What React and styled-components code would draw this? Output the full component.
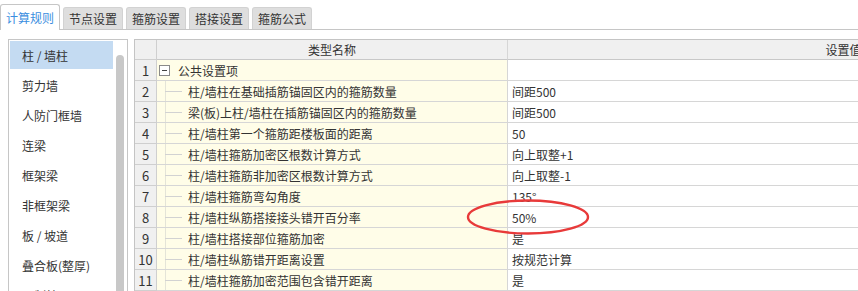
import React from 'react';
import styled, { createGlobalStyle } from 'styled-components';

const GlobalStyle = createGlobalStyle`
    html, body {
        margin: 0;
        padding: 0;
        background: #ffffff;
    }
    body {
        font-family: "Noto Sans CJK SC", "Microsoft YaHei", "Noto Sans", sans-serif;
        font-size: 12px;
        color: #333333;
        overflow: hidden;
    }
`;

const tabs = ['计算规则', '节点设置', '箍筋设置', '搭接设置', '箍筋公式'];

const sideItems = ['柱 / 墙柱', '剪力墙', '人防门框墙', '连梁', '框架梁', '非框架梁', '板 / 坡道', '叠合板(整厚)', '预制柱'];

const rows = [
    ['柱/墙柱在基础插筋锚固区内的箍筋数量', '间距500'],
    ['梁(板)上柱/墙柱在插筋锚固区内的箍筋数量', '间距500'],
    ['柱/墙柱第一个箍筋距楼板面的距离', '50'],
    ['柱/墙柱箍筋加密区根数计算方式', '向上取整+1'],
    ['柱/墙柱箍筋非加密区根数计算方式', '向上取整-1'],
    ['柱/墙柱箍筋弯勾角度', '135°'],
    ['柱/墙柱纵筋搭接接头错开百分率', '50%'],
    ['柱/墙柱搭接部位箍筋加密', '是'],
    ['柱/墙柱纵筋错开距离设置', '按规范计算'],
    ['柱/墙柱箍筋加密范围包含错开距离', '是'],
];

const App = () => {
    return (
        <Page>
            <GlobalStyle />
            <TabBar>
                {tabs.map((t, i) => (
                    <Tab key={t} $active={i === 0}>{t}</Tab>
                ))}
            </TabBar>
            <Body>
                <SidePanel>
                    <SideList>
                        {sideItems.map((s, i) => (
                            <SideItem key={s} $selected={i === 0}>{s}</SideItem>
                        ))}
                    </SideList>
                    <ScrollTrack>
                        <ScrollThumb />
                    </ScrollTrack>
                </SidePanel>
                <Grid>
                    <Row $header>
                        <NumCell />
                        <HeadCell>类型名称</HeadCell>
                        <HeadCell>设置值</HeadCell>
                    </Row>
                    <Row>
                        <NumCell>1</NumCell>
                        <NameCell $group>
                            <Toggle />
                            公共设置项
                        </NameCell>
                        <ValueCell />
                    </Row>
                    {rows.map(([name, value], i) => (
                        <Row key={name}>
                            <NumCell>{i + 2}</NumCell>
                            <NameCell>{name}</NameCell>
                            <ValueCell>{value}</ValueCell>
                        </Row>
                    ))}
                </Grid>
            </Body>
            <Mark width="128" height="40" viewBox="0 0 128 40">
                <ellipse cx="64" cy="20" rx="60" ry="16.5" fill="none" stroke="#e83a3a" strokeWidth="2.4" />
            </Mark>
        </Page>
    );
};

const Page = styled.div`
    position: relative;
    width: 858px;
    height: 291px;
    overflow: hidden;
`;

const TabBar = styled.div`
    display: flex;
    align-items: flex-end;
    gap: 3px;
    height: 29px;
    border-bottom: 1px solid #c6c6c6;
`;

const Tab = styled.div`
    box-sizing: border-box;
    width: 60px;
    display: flex;
    align-items: center;
    justify-content: center;
    border: 1px solid ${({ $active }) => ($active ? '#c6c6c6' : '#d2d2d2')};
    border-bottom: none;
    border-radius: 3px 3px 0 0;
    background: ${({ $active }) => ($active ? '#ffffff' : '#dedede')};
    color: ${({ $active }) => ($active ? '#3a8ee0' : '#333333')};
    height: ${({ $active }) => ($active ? '26px' : '22px')};
    margin-bottom: ${({ $active }) => ($active ? '-1px' : '0')};
    font-size: 12px;
`;

const Body = styled.div`
    display: flex;
    gap: 6px;
    padding: 9px 0 0 8px;
`;

const SidePanel = styled.div`
    box-sizing: border-box;
    display: flex;
    width: 120px;
    height: 262px;
    border: 1px solid #c6c6c6;
    padding: 1px 0 0 1px;
    flex-shrink: 0;
    overflow: hidden;
`;

const SideList = styled.div`
    width: 103px;
    display: flex;
    flex-direction: column;
    gap: 2px;
`;

const SideItem = styled.div`
    height: 28px;
    flex-shrink: 0;
    display: flex;
    align-items: center;
    padding-left: 12px;
    background: ${({ $selected }) => ($selected ? '#c4dbf2' : 'transparent')};
    white-space: nowrap;
`;

const ScrollTrack = styled.div`
    flex: 1;
    padding: 14px 3px 0 3px;
`;

const ScrollThumb = styled.div`
    height: 100%;
    background: #c8c8c8;
    border-radius: 4px 4px 0 0;
`;

const Grid = styled.div`
    display: flex;
    flex-direction: column;
    border-top: 1px solid #c4c4c4;
    border-left: 1px solid #c4c4c4;
    flex-shrink: 0;
`;

const Row = styled.div`
    display: grid;
    grid-template-columns: 22px 351px 672px;
    height: ${({ $header }) => ($header ? '20px' : '21px')};
    background: ${({ $header }) => ($header ? '#f0f0f0' : 'transparent')};
`;

const Cell = styled.div`
    box-sizing: border-box;
    display: flex;
    align-items: center;
    border-right: 1px solid #d6d6d6;
    border-bottom: 1px solid #d6d6d6;
    white-space: nowrap;
    overflow: hidden;
`;

const NumCell = styled(Cell)`
    justify-content: center;
    background: #f0f0f0;
    border-color: #cfcfcf;
    font-size: 13px;
`;

const HeadCell = styled(Cell)`
    justify-content: center;
    border-bottom-color: #c8c8c8;
`;

const NameCell = styled(Cell)`
    position: relative;
    background: #fffde8;
    padding-left: ${({ $group }) => ($group ? '2px' : '31px')};
    gap: 8px;

    &::before {
        content: ${({ $group }) => ($group ? 'none' : "''")};
        position: absolute;
        left: 8px;
        top: 0;
        bottom: 0;
        border-left: 1px solid #e4e4d8;
    }
    &::after {
        content: ${({ $group }) => ($group ? 'none' : "''")};
        position: absolute;
        left: 8px;
        top: 50%;
        width: 17px;
        border-top: 1px solid #d2d2d2;
    }
`;

const ValueCell = styled(Cell)`
    background: #ffffff;
    padding-left: 4px;
`;

const Toggle = styled.span`
    box-sizing: border-box;
    position: relative;
    width: 11px;
    height: 11px;
    border: 1px solid #8a8a8a;
    background: #ffffff;
    flex-shrink: 0;

    &::after {
        content: '';
        position: absolute;
        left: 2px;
        right: 2px;
        top: 4px;
        border-top: 1px solid #444444;
    }
`;

const Mark = styled.svg`
    position: absolute;
    left: 464px;
    top: 197px;
    pointer-events: none;
`;

export default App;
